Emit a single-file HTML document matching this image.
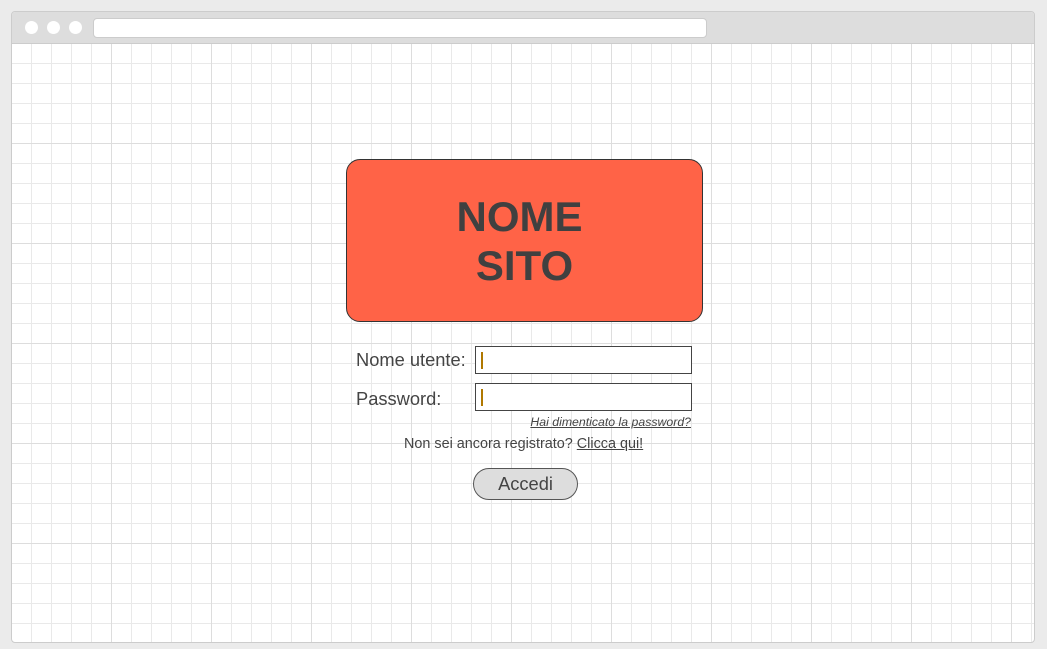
<!DOCTYPE html>
<html><head><style>
body{margin:0;width:1047px;height:649px;background:#ebebeb;font-family:"Liberation Sans",sans-serif;position:relative;overflow:hidden;color:#444}
.win{position:absolute;left:11px;top:11px;width:1022px;height:630px;border:1px solid #ccc;border-radius:4px;background:#fff;overflow:hidden}
.bar{position:absolute;left:0;top:0;right:0;height:31px;background:#ddd;border-bottom:1px solid #ccc}
.dot{position:absolute;top:9px;width:13px;height:13px;border-radius:50%;background:#fff}
.url{position:absolute;left:81px;top:6px;width:612px;height:18px;background:#fff;border:1px solid #ccc;border-radius:4px}
.grid{background-image:linear-gradient(#ddd 1px,transparent 1px),linear-gradient(90deg,#ddd 1px,transparent 1px),linear-gradient(#e9e9e9 1px,transparent 1px),linear-gradient(90deg,#e9e9e9 1px,transparent 1px);
background-size:100px 100px,100px 100px,20px 20px,20px 20px;background-position:0 -1px,-1px 0,0 -1px,-1px 0}
.logo{position:absolute;left:346px;top:159px;width:357px;height:163px;background:#ff6347;border:1px solid #333;border-radius:14px;box-sizing:border-box;text-align:center;font-weight:bold;font-size:42px;line-height:49px;padding-top:32px;color:#404040}
.lbl{position:absolute;left:356px;font-size:18.3px}
.inp{position:absolute;left:475px;width:215px;height:26px;border:1px solid #444;background:#fff}
.inp::after{content:"";position:absolute;left:5px;top:5px;width:2px;height:17px;background:#b07800}
.a{text-decoration:underline}
</style></head><body>
<div class="win"><div class="bar"><div class="dot" style="left:13px"></div><div class="dot" style="left:35px"></div><div class="dot" style="left:57px"></div><div class="url"></div></div></div>
<div class="grid" style="position:absolute;left:12px;top:44px;width:1022px;height:598px"></div>
<div class="logo"><span style="margin-left:-10px">NOME</span><br>SITO</div>
<div class="lbl" style="top:349px">Nome utente:</div>
<div class="lbl" style="top:388px">Password:</div>
<div class="inp" style="top:346px"></div>
<div class="inp" style="top:383px"></div>
<div class="a" style="position:absolute;right:356px;top:415px;font-size:12.3px;font-style:italic">Hai dimenticato la password?</div>
<div style="position:absolute;left:404px;top:436px;font-size:14.4px">Non sei ancora registrato? <span class="a">Clicca qui!</span></div>
<div style="position:absolute;left:473px;top:468px;width:105px;height:32px;box-sizing:border-box;border:1px solid #555;border-radius:16px;background:#ddd;text-align:center;font-size:18.3px;line-height:30px">Accedi</div>
</body></html>
